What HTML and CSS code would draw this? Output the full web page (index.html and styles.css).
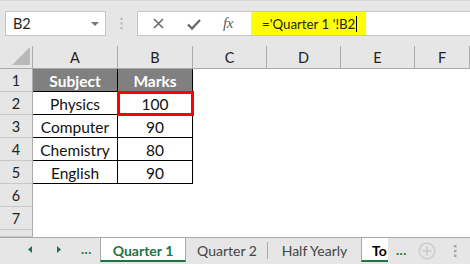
FILE: index.html
```html
<!DOCTYPE html>
<html>
<head>
<meta charset="utf-8">
<link rel="stylesheet" href="styles.css">
</head>
<body>
<div class="app">
  <div class="toolbar">
    <div class="namebox">
      <span class="nb-text">B2</span>
      <svg class="nb-caret" width="8" height="4" viewBox="0 0 8 4"><path d="M0 0H8L4 4Z" fill="#777"/></svg>
    </div>
    <div class="grip">
      <svg width="3" height="11" viewBox="0 0 3 11"><rect x="0.5" y="0" width="2" height="2" fill="#b4b4b4"/><rect x="0.5" y="4.5" width="2" height="2" fill="#b4b4b4"/><rect x="0.5" y="9" width="2" height="2" fill="#b4b4b4"/></svg>
    </div>
    <div class="fbar">
      <div class="ficons">
        <svg class="ic-x" width="11" height="11" viewBox="0 0 11 11"><path d="M1 1L10 10M10 1L1 10" stroke="#6a6a6a" stroke-width="1.6" fill="none"/></svg>
        <svg class="ic-check" width="14" height="11" viewBox="0 0 14 11"><path d="M1 5.5L5 9.5L13 1" stroke="#6a6a6a" stroke-width="2.4" fill="none"/></svg>
        <span class="ic-fx">fx</span>
      </div>
      <div class="formula">
        <span class="hl">='Quarter 1 '!B2<span class="cursor"></span></span>
      </div>
    </div>
  </div>

  <div class="sheet">
    <div class="corner"><svg width="18" height="18" viewBox="0 0 18 18"><path d="M18 0V18H0Z" fill="#b9b9b9"/></svg></div>
    <div class="ch">A</div>
    <div class="ch">B</div>
    <div class="ch">C</div>
    <div class="ch">D</div>
    <div class="ch">E</div>
    <div class="ch">F</div>

    <div class="rh">1</div>
    <div class="c t th">Subject</div>
    <div class="c t th">Marks</div>
    <div class="c"></div><div class="c"></div><div class="c"></div><div class="c"></div>

    <div class="rh">2</div>
    <div class="c t">Physics</div>
    <div class="c t sel">100</div>
    <div class="c"></div><div class="c"></div><div class="c"></div><div class="c"></div>

    <div class="rh">3</div>
    <div class="c t">Computer</div>
    <div class="c t">90</div>
    <div class="c"></div><div class="c"></div><div class="c"></div><div class="c"></div>

    <div class="rh">4</div>
    <div class="c t">Chemistry</div>
    <div class="c t">80</div>
    <div class="c"></div><div class="c"></div><div class="c"></div><div class="c"></div>

    <div class="rh">5</div>
    <div class="c t">English</div>
    <div class="c t">90</div>
    <div class="c"></div><div class="c"></div><div class="c"></div><div class="c"></div>

    <div class="rh">6</div>
    <div class="c"></div><div class="c"></div><div class="c"></div><div class="c"></div><div class="c"></div><div class="c"></div>

    <div class="rh">7</div>
    <div class="c"></div><div class="c"></div><div class="c"></div><div class="c"></div><div class="c"></div><div class="c"></div>

    <div class="rh"></div>
    <div class="c"></div><div class="c"></div><div class="c"></div><div class="c"></div><div class="c"></div><div class="c"></div>
  </div>

  <div class="tabs">
    <div class="nav">
      <svg width="4" height="7" viewBox="0 0 4 7"><path d="M4 0V7L0 3.5Z" fill="#217346"/></svg>
      <svg class="nav-r" width="4" height="7" viewBox="0 0 4 7"><path d="M0 0V7L4 3.5Z" fill="#217346"/></svg>
      <span class="more">...</span>
    </div>
    <div class="tab active">Quarter 1</div>
    <div class="tab q2">Quarter 2</div>
    <div class="tab hy">Half Yearly</div>
    <div class="tab active to">To</div>
    <span class="more more2">...</span>
    <svg class="plus" width="18" height="18" viewBox="0 0 18 18"><circle cx="9" cy="9" r="7.8" stroke="#cbcbcb" stroke-width="1.4" fill="none"/><path d="M9 4.5V13.5M4.5 9H13.5" stroke="#cbcbcb" stroke-width="1.6"/></svg>
    <svg class="vdots" width="3" height="12" viewBox="0 0 3 12"><rect x="0" y="0" width="2.5" height="2.5" fill="#a8a8a8"/><rect x="0" y="4.8" width="2.5" height="2.5" fill="#a8a8a8"/><rect x="0" y="9.5" width="2.5" height="2.5" fill="#a8a8a8"/></svg>
  </div>
</div>
</body>
</html>
```

FILE: styles.css
```css
* { box-sizing: border-box; }
html, body { margin: 0; padding: 0; }
body {
  width: 470px;
  height: 264px;
  overflow: hidden;
  background: #ffffff;
  font-family: Lato, "Open Sans", sans-serif;
}
.app {
  display: flex;
  flex-direction: column;
  height: 264px;
}

/* toolbar */
.toolbar {
  height: 46px;
  background: #e6e6e6;
  border-top: 1px solid #d6d6d6;
  display: flex;
  align-items: flex-start;
  padding: 10px 0 0 5px;
  flex: none;
}
.namebox {
  width: 101px;
  height: 25px;
  background: #fff;
  border: 1px solid #c6c6c6;
  display: flex;
  align-items: center;
  justify-content: space-between;
  padding: 0 6px 0 7px;
}
.nb-text {
  font-size: 14.5px;
  color: #262626;
}
.grip {
  width: 31px;
  height: 25px;
  display: flex;
  align-items: center;
  justify-content: center;
}
.fbar {
  flex: 1;
  height: 25px;
  background: #fff;
  border: 1px solid #c6c6c6;
  border-right: none;
  display: flex;
  align-items: stretch;
}
.ficons {
  width: 113px;
  display: flex;
  align-items: center;
  padding-left: 15px;
}
.ic-x { margin-right: 23px; }
.ic-check { margin-right: 22px; margin-top: 2px; }
.ic-fx {
  font-family: "Liberation Serif", serif;
  font-style: italic;
  font-size: 15px;
  color: #5a5a5a;
  letter-spacing: -0.5px;
}
.formula {
  flex: 1;
  display: flex;
  align-items: stretch;
}
.hl {
  background: #ffff00;
  width: 115px;
  display: flex;
  align-items: center;
  padding-left: 11px;
  font-size: 13.3px;
  color: #222;
  white-space: nowrap;
}
.cursor {
  display: inline-block;
  width: 1px;
  height: 16px;
  background: #000;
  margin-left: 1px;
}

/* sheet */
.sheet {
  display: grid;
  grid-template-columns: 33px 85px 75px 74px 74px 74px 55px;
  grid-template-rows: 23px repeat(7, 23px) 7px;
  flex: none;
  height: 191px;
  overflow: hidden;
}
.corner {
  background: #e6e6e6;
  border-right: 1px solid #ababab;
  border-bottom: 1px solid #ababab;
  display: flex;
  align-items: flex-end;
  justify-content: flex-end;
  padding: 0 2px 3px 0;
}
.ch {
  background: #e6e6e6;
  border-right: 1px solid #ababab;
  border-bottom: 1px solid #ababab;
  display: flex;
  align-items: center;
  justify-content: center;
  font-size: 14.5px;
  color: #222;
  padding-top: 1px;
}
.rh {
  background: #e6e6e6;
  border-right: 1px solid #ababab;
  border-bottom: 1px solid #c8c8c8;
  display: flex;
  align-items: center;
  justify-content: center;
  font-size: 14.5px;
  color: #222;
}
.c {
  background: #fff;
}
.t {
  border-right: 1px solid #000;
  border-bottom: 1px solid #000;
  display: flex;
  align-items: center;
  justify-content: center;
  font-size: 15.5px;
  color: #111;
  padding-top: 1px;
}
.th {
  background: #808080;
  color: #fff;
  font-weight: bold;
}
.sel {
  outline: 3px solid #ff0000;
  outline-offset: -2px;
  position: relative;
}

/* tabs */
.tabs {
  flex: 1;
  background: #e6e6e6;
  border-top: 1px solid #a9a9a9;
  display: flex;
  align-items: flex-start;
  font-size: 14px;
}
.nav {
  width: 100px;
  height: 23px;
  display: flex;
  align-items: center;
  padding-left: 28px;
}
.nav-r { margin-left: 25px; }
.more {
  color: #217346;
  font-weight: bold;
  font-size: 13px;
  margin-left: 20px;
  letter-spacing: 0.5px;
  padding-bottom: 2px;
}
.tab {
  height: 24px;
  display: flex;
  align-items: center;
  justify-content: center;
  color: #444;
  white-space: nowrap;
  overflow: hidden;
}
.tab.active {
  background: #fff;
  color: #217346;
  font-weight: bold;
  border-left: 1px solid #a9a9a9;
  border-right: 1px solid #a9a9a9;
  border-bottom: 2px solid #217346;
  width: 86px;
  padding-top: 2px;
}
.q2 {
  width: 82px;
  position: relative;
}
.q2::after {
  content: "";
  position: absolute;
  right: 0;
  top: 4px;
  height: 17px;
  width: 1px;
  background: #a9a9a9;
}
.hy { width: 93px; }
.tab.active.to {
  width: 27px;
  color: #000;
  justify-content: flex-start;
  padding-left: 10px;
  border-right: none;
}
.more2 {
  margin-left: 8px;
  margin-top: 4px;
}
.plus { margin-left: 11px; margin-top: 4px; }
.vdots { margin-left: 18px; margin-top: 7px; }
```
